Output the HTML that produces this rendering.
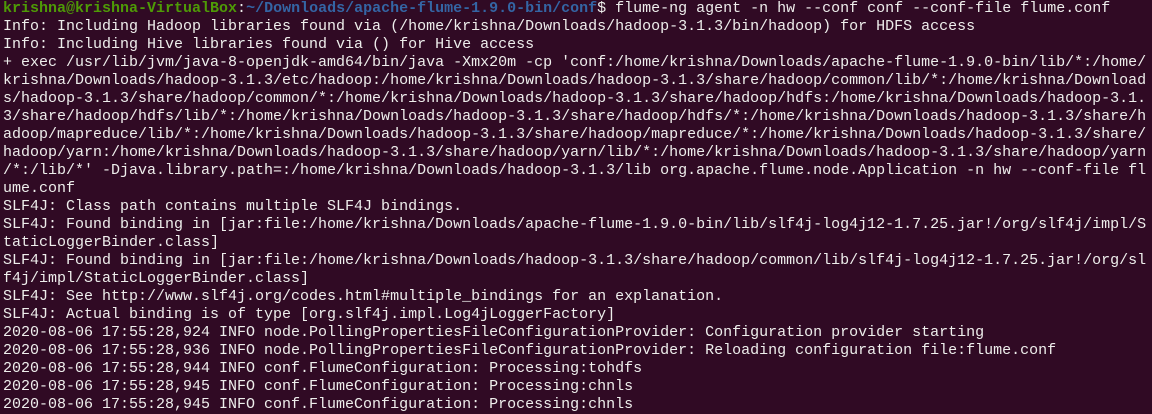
<!DOCTYPE html>
<html><head><meta charset="utf-8"><style>
html,body{margin:0;padding:0;background:#300a24;width:1152px;height:412px;overflow:hidden}
pre{margin:0;position:absolute;left:3px;top:0px;font-family:"Liberation Mono",monospace;font-size:15px;line-height:18px;color:#eeeeec;white-space:pre}
.g{color:#4e9a06;font-weight:bold}.b{color:#3465a4;font-weight:bold}
</style></head><body><pre><span class="g">krishna@krishna-VirtualBox</span>:<span class="b">~/Downloads/apache-flume-1.9.0-bin/conf</span>$ flume-ng agent -n hw --conf conf --conf-file flume.conf
Info: Including Hadoop libraries found via (/home/krishna/Downloads/hadoop-3.1.3/bin/hadoop) for HDFS access
Info: Including Hive libraries found via () for Hive access
+ exec /usr/lib/jvm/java-8-openjdk-amd64/bin/java -Xmx20m -cp 'conf:/home/krishna/Downloads/apache-flume-1.9.0-bin/lib/*:/home/
krishna/Downloads/hadoop-3.1.3/etc/hadoop:/home/krishna/Downloads/hadoop-3.1.3/share/hadoop/common/lib/*:/home/krishna/Download
s/hadoop-3.1.3/share/hadoop/common/*:/home/krishna/Downloads/hadoop-3.1.3/share/hadoop/hdfs:/home/krishna/Downloads/hadoop-3.1.
3/share/hadoop/hdfs/lib/*:/home/krishna/Downloads/hadoop-3.1.3/share/hadoop/hdfs/*:/home/krishna/Downloads/hadoop-3.1.3/share/h
adoop/mapreduce/lib/*:/home/krishna/Downloads/hadoop-3.1.3/share/hadoop/mapreduce/*:/home/krishna/Downloads/hadoop-3.1.3/share/
hadoop/yarn:/home/krishna/Downloads/hadoop-3.1.3/share/hadoop/yarn/lib/*:/home/krishna/Downloads/hadoop-3.1.3/share/hadoop/yarn
/*:/lib/*' -Djava.library.path=:/home/krishna/Downloads/hadoop-3.1.3/lib org.apache.flume.node.Application -n hw --conf-file fl
ume.conf
SLF4J: Class path contains multiple SLF4J bindings.
SLF4J: Found binding in [jar:file:/home/krishna/Downloads/apache-flume-1.9.0-bin/lib/slf4j-log4j12-1.7.25.jar!/org/slf4j/impl/S
taticLoggerBinder.class]
SLF4J: Found binding in [jar:file:/home/krishna/Downloads/hadoop-3.1.3/share/hadoop/common/lib/slf4j-log4j12-1.7.25.jar!/org/sl
f4j/impl/StaticLoggerBinder.class]
SLF4J: See http://www.slf4j.org/codes.html#multiple_bindings for an explanation.
SLF4J: Actual binding is of type [org.slf4j.impl.Log4jLoggerFactory]
2020-08-06 17:55:28,924 INFO node.PollingPropertiesFileConfigurationProvider: Configuration provider starting
2020-08-06 17:55:28,936 INFO node.PollingPropertiesFileConfigurationProvider: Reloading configuration file:flume.conf
2020-08-06 17:55:28,944 INFO conf.FlumeConfiguration: Processing:tohdfs
2020-08-06 17:55:28,945 INFO conf.FlumeConfiguration: Processing:chnls
2020-08-06 17:55:28,945 INFO conf.FlumeConfiguration: Processing:chnls</pre></body></html>
